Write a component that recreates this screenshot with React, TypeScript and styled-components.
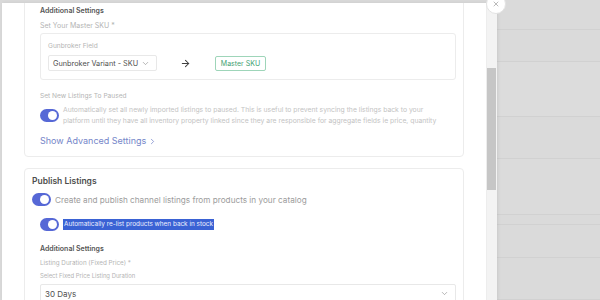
import styled, { createGlobalStyle } from "styled-components";
import { ArrowRight, ChevronDown, ChevronRight, X } from "lucide-react";

// ----------------------------------------------
//  global
// ----------------------------------------------
const GlobalStyle = createGlobalStyle`
  html, body {
    margin: 0;
    padding: 0;
    background: #d9d9d9;
    overflow: hidden;
  }
  body {
    font-family: Inter, "Noto Sans", "Liberation Sans", sans-serif;
    -webkit-font-smoothing: antialiased;
  }
  * {
    box-sizing: border-box;
  }
`;

// ----------------------------------------------
//  layout
// ----------------------------------------------
const Screen = styled.div`
  display: flex;
  width: 600px;
  height: 300px;
  background: #d9d9d9;
  overflow: hidden;
`;

const Modal = styled.div`
  position: relative;
  display: flex;
  width: 495px;
  height: 297px;
  margin: 3px 0 0 2px;
  background: #ffffff;
  box-shadow: 1px 0 3px rgba(0, 0, 0, 0.08);
`;

const Viewport = styled.div`
  flex: 1;
  overflow: hidden;
  padding: 0 22px;
`;

const Scroller = styled.div`
  display: flex;
  flex-direction: column;
  gap: 11px;
  margin-top: -6px;
`;

const ScrollTrack = styled.div`
  width: 11px;
  background: #f3f3f3;
  border-left: 1px solid #ededed;
  padding-top: 65px;
`;

const ScrollThumb = styled.div`
  width: 9px;
  height: 122px;
  background: #c6c6c6;
`;

const CloseButton = styled.button`
  position: absolute;
  top: -9px;
  left: 484px;
  display: flex;
  align-items: center;
  justify-content: center;
  width: 20px;
  height: 20px;
  padding: 0;
  border-radius: 50%;
  border: 1px solid #e3e3e3;
  background: #ffffff;
  color: #a0a0a0;
`;

const Backdrop = styled.div`
  flex: 1;
  display: flex;
  flex-direction: column;
  box-shadow: inset 2px 0 3px rgba(0, 0, 0, 0.05);
`;

const BackRow = styled.div<{ $h: number; $tone?: string }>`
  height: ${(p) => p.$h}px;
  flex-shrink: 0;
  border-bottom: 1px solid #d1d1d1;
  background: ${(p) => p.$tone ?? "#dadada"};
`;

// ----------------------------------------------
//  card parts
// ----------------------------------------------
const Card = styled.section<{ $pt?: number }>`
  display: flex;
  flex-direction: column;
  padding: ${(p) => p.$pt ?? 6}px 7px 8px;
  border: 1px solid #ececec;
  border-radius: 4px;
  background: #fff;
`;

const Nested = styled.div`
  display: flex;
  flex-direction: column;
  margin-left: 8px;
`;

const CardTitle = styled.h2`
  margin: 0;
  font-size: 8.5px;
  line-height: 12px;
  font-weight: 600;
  color: #4d4d4d;
`;

const SubTitle = styled.h3<{ $mt?: number }>`
  margin: ${(p) => p.$mt ?? 0}px 0 0;
  font-size: 7px;
  line-height: 12px;
  font-weight: 600;
  color: #555;
`;

const Label = styled.div<{ $mt?: number; $size?: number }>`
  margin-top: ${(p) => p.$mt ?? 0}px;
  font-size: ${(p) => p.$size ?? 6.6}px;
  line-height: 10px;
  color: #b4b4b4;
  white-space: nowrap;
`;

const MapBox = styled.div`
  display: flex;
  flex-direction: column;
  gap: 4px;
  margin-top: 2px;
  padding: 7px 7px 8px;
  border: 1px solid #ececec;
  border-radius: 3px;
`;

const MapRow = styled.div<{ $mt?: number }>`
  display: flex;
  align-items: center;
  margin-top: ${(p) => p.$mt ?? 0}px;
`;

const Select = styled.div<{ $wide?: boolean }>`
  display: flex;
  align-items: center;
  justify-content: space-between;
  width: ${(p) => (p.$wide ? "100%" : "109px")};
  height: ${(p) => (p.$wide ? 19 : 16)}px;
  padding: 0 6px 0 4px;
  border: 1px solid #e8e8e8;
  border-radius: 2px;
  font-size: ${(p) => (p.$wide ? 8 : 7.3)}px;
  color: #4f4f4f;
  white-space: nowrap;
  svg {
    flex-shrink: 0;
    color: #888;
  }
`;

const Arrow = styled.span`
  display: flex;
  margin-left: 23px;
  color: #3f3f3f;
`;

const Badge = styled.span`
  margin-left: 24px;
  display: flex;
  align-items: center;
  justify-content: center;
  width: 51px;
  height: 15px;
  border: 1px solid #9ed5b9;
  border-radius: 2px;
  font-size: 7px;
  color: #3f9f72;
`;

const ToggleRow = styled.div<{ $mt?: number }>`
  display: flex;
  align-items: center;
  gap: 4px;
  margin-top: ${(p) => p.$mt ?? 0}px;
`;

const Toggle = styled.span`
  display: flex;
  align-items: center;
  justify-content: flex-end;
  flex-shrink: 0;
  width: 19px;
  height: 13px;
  padding-right: 2px;
  border-radius: 7px;
  background: #5668d6;
  &::after {
    content: "";
    width: 9px;
    height: 9px;
    border-radius: 50%;
    background: #fff;
  }
`;

const Desc = styled.p`
  max-width: 388px;
  margin: 0;
  font-size: 6.8px;
  line-height: 11px;
  color: #c3c3c3;
`;

const ToggleText = styled.span`
  font-size: 8.2px;
  color: #9c9c9c;
`;

const Highlight = styled.span`
  font-size: 6.4px;
  line-height: 11px;
  padding: 0 1px;
  background: #3a62d4;
  color: #eef1ff;
`;

const AdvancedLink = styled.a`
  display: flex;
  align-items: center;
  gap: 2px;
  margin-top: 8px;
  font-size: 9px;
  line-height: 14px;
  color: #7586c9;
`;

// ----------------------------------------------
//  function App()
// ----------------------------------------------
export default function App() {
  return (
    <Screen>
      <GlobalStyle />
      <Modal>
        <Viewport>
          <Scroller>
            <Card $pt={7}>
              <Nested>
                <SubTitle>Additional Settings</SubTitle>
                <Label $mt={4} $size={7}>
                  Set Your Master SKU *
                </Label>
                <MapBox>
                  <Label>Gunbroker Field</Label>
                  <MapRow>
                    <Select>
                      <span>Gunbroker Variant - SKU</span>
                      <ChevronDown size={9} strokeWidth={1.6} />
                    </Select>
                    <Arrow>
                      <ArrowRight size={11} strokeWidth={2.2} />
                    </Arrow>
                    <Badge>Master SKU</Badge>
                  </MapRow>
                </MapBox>
                <Label $mt={11}>Set New Listings To Paused</Label>
                <ToggleRow $mt={3}>
                  <Toggle />
                  <Desc>
                    Automatically set all newly imported listings to paused. This is useful to
                    prevent syncing the listings back to your platform until they have all
                    inventory property linked since they are responsible for aggregate fields ie
                    price, quantity
                  </Desc>
                </ToggleRow>
                <AdvancedLink>
                  Show Advanced Settings
                  <ChevronRight size={9} strokeWidth={2} />
                </AdvancedLink>
              </Nested>
            </Card>

            <Card>
              <CardTitle>Publish Listings</CardTitle>
              <ToggleRow $mt={6}>
                <Toggle />
                <ToggleText>
                  Create and publish channel listings from products in your catalog
                </ToggleText>
              </ToggleRow>
              <Nested>
                <ToggleRow $mt={12}>
                  <Toggle />
                  <Highlight>Automatically re-list products when back in stock</Highlight>
                </ToggleRow>
                <SubTitle $mt={12}>Additional Settings</SubTitle>
                <Label $mt={3} $size={6.3}>
                  Listing Duration (Fixed Price) *
                </Label>
                <Label $mt={3} $size={5.9}>
                  Select Fixed Price Listing Duration
                </Label>
                <MapRow $mt={3}>
                  <Select $wide>
                    <span>30 Days</span>
                    <ChevronDown size={9} strokeWidth={1.6} />
                  </Select>
                </MapRow>
              </Nested>
            </Card>
          </Scroller>
        </Viewport>
        <ScrollTrack>
          <ScrollThumb />
        </ScrollTrack>
        <CloseButton>
          <X size={8} strokeWidth={2.2} />
        </CloseButton>
      </Modal>
      <Backdrop>
        <BackRow $h={30} />
        <BackRow $h={32} />
        <BackRow $h={55} $tone="#dcdcdc" />
        <BackRow $h={42} />
        <BackRow $h={56} $tone="#dbdbdb" />
        <BackRow $h={10} />
        <BackRow $h={33} />
        <BackRow $h={42} />
      </Backdrop>
    </Screen>
  );
}
